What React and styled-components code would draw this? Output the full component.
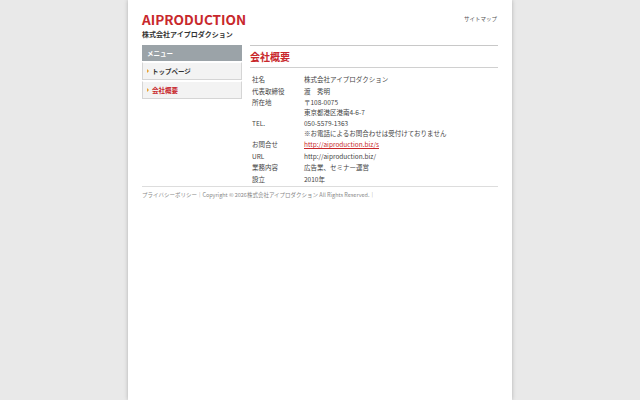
import React from "react";
import styled, { createGlobalStyle } from "styled-components";

const GlobalStyle = createGlobalStyle`
  html, body {
    margin: 0;
    padding: 0;
    background: #e9e9e9;
    font-family: "Noto Sans CJK JP", "Noto Sans", sans-serif;
    color: #333;
  }
`;

const rows = [
  { label: "社名", value: ["株式会社アイプロダクション"] },
  { label: "代表取締役", value: ["渡　秀明"] },
  { label: "所在地", value: ["〒108-0075", "東京都港区港南4-6-7"] },
  { label: "TEL.", value: ["050-5579-1363", "※お電話によるお問合わせは受付けておりません"] },
  { label: "お問合せ", value: ["http://aiproduction.biz/s"], link: true },
  { label: "URL", value: ["http://aiproduction.biz/"] },
  { label: "業務内容", value: ["広告業、セミナー運営"] },
  { label: "設立", value: ["2010年"] },
];

const App = () => {
  return (
    <>
      <GlobalStyle />
      <Page>
        <Header>
          <div>
            <Logo>AIPRODUCTION</Logo>
            <Company>株式会社アイプロダクション</Company>
          </div>
          <Sitemap>サイトマップ</Sitemap>
        </Header>
        <Body>
          <Side>
            <MenuHead>メニュー</MenuHead>
            <MenuItem>トップページ</MenuItem>
            <MenuItem active>会社概要</MenuItem>
          </Side>
          <Main>
            <Title>会社概要</Title>
            <Table>
              {rows.map((r) => (
                <Row key={r.label}>
                  <Label>{r.label}</Label>
                  <Value>
                    {r.value.map((v) =>
                      r.link ? <Link key={v}>{v}</Link> : <div key={v}>{v}</div>
                    )}
                  </Value>
                </Row>
              ))}
            </Table>
          </Main>
        </Body>
        <Footer>
          プライバシーポリシー｜Copyright © 2026株式会社アイプロダクション All Rights Reserved.｜
        </Footer>
      </Page>
    </>
  );
};

const Page = styled.div`
  width: 356px;
  min-height: 100vh;
  margin: 0 auto;
  padding: 0 14px;
  background: #fff;
  box-shadow: 0 0 4px rgba(0, 0, 0, 0.25);
`;

const Header = styled.div`
  display: flex;
  justify-content: space-between;
  align-items: flex-start;
  padding-top: 10px;
`;

const Logo = styled.div`
  font-size: 13.6px;
  font-weight: 700;
  color: #c8282c;
  line-height: 18px;
`;

const Company = styled.div`
  font-size: 7px;
  font-weight: 700;
  color: #333;
  line-height: 9px;
  margin-top: 2px;
`;

const Sitemap = styled.div`
  font-size: 5.5px;
  color: #555;
  margin-top: 5px;
  padding-right: 1px;
`;

const Body = styled.div`
  display: flex;
  gap: 8px;
  margin-top: 6px;
`;

const Side = styled.div`
  width: 100px;
  display: flex;
  flex-direction: column;
  gap: 1px;
`;

const MenuHead = styled.div`
  height: 16px;
  line-height: 16px;
  background: #9ba3a8;
  color: #fff;
  font-size: 6.5px;
  font-weight: 700;
  padding-left: 5px;
`;

const MenuItem = styled.div`
  position: relative;
  height: 16px;
  line-height: 17px;
  background: #f3f3f3;
  border: 1px solid #d5d5d5;
  border-top-color: #fff;
  font-size: 6.5px;
  font-weight: 700;
  color: ${(p) => (p.active ? "#c8282c" : "#333")};
  padding-left: 9px;
  &::before {
    content: "";
    position: absolute;
    left: 4px;
    top: 6px;
    border-left: 2.5px solid #e8a233;
    border-top: 2.5px solid transparent;
    border-bottom: 2.5px solid transparent;
  }
`;

const Main = styled.div`
  flex: 1;
  border-top: 1px solid #c8c8c8;
`;

const Title = styled.div`
  font-size: 10px;
  font-weight: 700;
  color: #c8282c;
  line-height: 14px;
  padding: 4px 0 3px;
  border-bottom: 1px solid #d0d0d0;
`;

const Table = styled.div`
  padding: 6px 2px 0;
`;

const Row = styled.div`
  display: flex;
  padding: 1px 0;
  font-size: 6.5px;
  line-height: 9.5px;
  color: #444;
`;

const Label = styled.div`
  width: 52px;
`;

const Value = styled.div`
  flex: 1;
`;

const Link = styled.div`
  color: #c8282c;
  text-decoration: underline;
`;

const Footer = styled.div`
  margin-top: 1px;
  border-top: 1px solid #ddd;
  padding-top: 4px;
  font-size: 5.5px;
  color: #888;
`;

export default App;
